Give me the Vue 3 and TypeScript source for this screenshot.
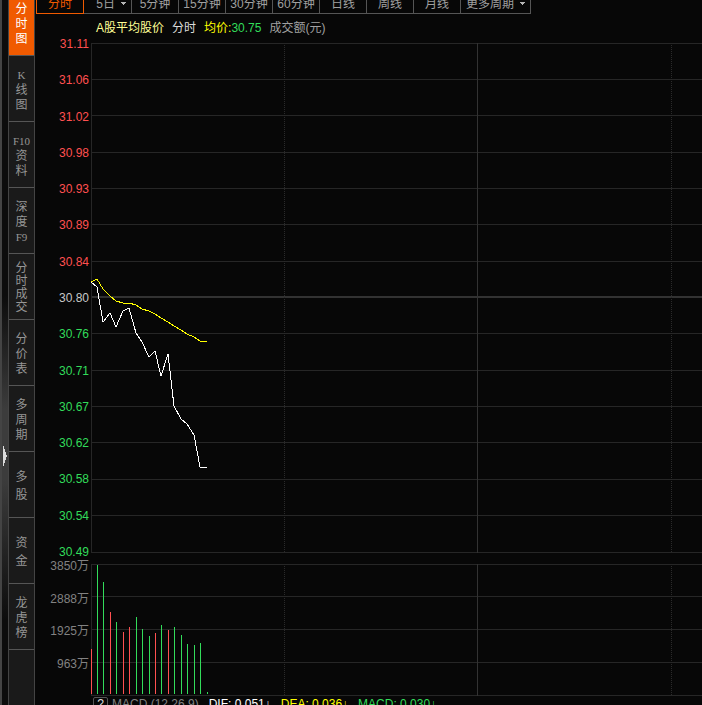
<script setup lang="ts">
import { computed, ref } from 'vue'

interface NavItem {
  lines: string[]
  spacing: 'tight' | 'normal' | 'loose'
}

interface Tab {
  label: string
  menu?: boolean
}

interface Bar {
  x: number
  top: number
  up?: boolean
}

const navItems: NavItem[] = [
  { lines: ['分', '时', '图'], spacing: 'normal' },
  { lines: ['K', '线', '图'], spacing: 'normal' },
  { lines: ['F10', '资', '料'], spacing: 'normal' },
  { lines: ['深', '度', 'F9'], spacing: 'normal' },
  { lines: ['分', '时', '成', '交'], spacing: 'tight' },
  { lines: ['分', '价', '表'], spacing: 'normal' },
  { lines: ['多', '周', '期'], spacing: 'normal' },
  { lines: ['多', '股'], spacing: 'loose' },
  { lines: ['资', '金'], spacing: 'loose' },
  { lines: ['龙', '虎', '榜'], spacing: 'normal' },
]
const activeNav = ref(0)

const tabs: Tab[] = [
  { label: '分时' },
  { label: '5日', menu: true },
  { label: '5分钟' },
  { label: '15分钟' },
  { label: '30分钟' },
  { label: '60分钟' },
  { label: '日线' },
  { label: '周线' },
  { label: '月线' },
  { label: '更多周期', menu: true },
]
const activeTab = ref(0)

const base = 30.8
const prices = [
  '31.11', '31.06', '31.02', '30.98', '30.93', '30.89', '30.84', '30.80',
  '30.76', '30.71', '30.67', '30.62', '30.58', '30.54', '30.49',
]
const tone = (p: string) => (Number(p) > base ? 'up' : Number(p) < base ? 'down' : 'flat')

const priceGrid = [0, 36, 72, 109, 145, 181, 218, 290, 327, 363, 399, 436, 472, 509]
const volumes = ['3850', '2888', '1925', '963']
const volumeGrid = [0, 32, 65, 98, 131]

// Minutes are laid out on a shared horizontal scale; both series use it.
const minutes = [0, 6, 12, 19, 25, 32, 38, 45, 51, 58, 64, 70, 77, 83, 90, 96, 103, 109, 116]
const priceSeries = [239, 244, 279, 270, 284, 268, 265, 290, 299, 314, 308, 333, 311, 363, 376, 381, 392, 424, 425]
const averageSeries = [239, 236, 246, 253, 258, 260, 260, 262, 266, 268, 271, 275, 279, 283, 287, 291, 294, 298, 298]

const toPoints = (ys: number[]) => ys.map((y, i) => `${minutes[i]},${y}`).join(' ')
const pricePoints = computed(() => toPoints(priceSeries))
const averagePoints = computed(() => toPoints(averageSeries))

const volumeTops = [85, 1, 18, 48, 58, 68, 63, 53, 65, 72, 69, 61, 66, 63, 71, 80, 81, 79, 128]
const rising = new Set([0, 3, 5, 6, 10, 12])
const bars: Bar[] = volumeTops.map((top, i) => ({ x: minutes[i], top, up: rising.has(i) }))
</script>

<template>
  <div class="terminal">
    <div class="splitter">
      <button class="handle" type="button" aria-label="展开">
        <svg width="4" height="20" viewBox="0 0 4 20" shape-rendering="crispEdges">
          <path d="M0 0h1v3h1v3h1v3h1v2h-1v3h-1v3h-1v3h-1z" fill="#dcdcdc" />
        </svg>
      </button>
    </div>

    <nav class="side">
      <button
        v-for="(item, i) in navItems"
        :key="i"
        type="button"
        class="side-item"
        :class="[item.spacing, { active: i === activeNav }]"
        @click="activeNav = i"
      >
        <span v-for="(line, j) in item.lines" :key="j" :class="{ latin: /[A-Z]/.test(line) }">{{ line }}</span>
      </button>
    </nav>

    <main class="board">
      <div class="tabs">
        <button
          v-for="(tab, i) in tabs"
          :key="tab.label"
          type="button"
          class="tab"
          :class="{ active: i === activeTab, menu: tab.menu, wide: tab.label.length > 3 && tab.menu }"
          @click="activeTab = i"
        >
          <span>{{ tab.label }}</span>
          <svg v-if="tab.menu" width="5" height="3" viewBox="0 0 5 3" shape-rendering="crispEdges">
            <path d="M0 0h5v1h-1v1h-1v1h-1v-1h-1v-1h-1z" fill="#b4b4b4" />
          </svg>
        </button>
      </div>

      <header class="legend">
        <span class="name">A股平均股价</span>
        <span class="mode">分时</span>
        <span class="avg">均价:<span class="value">30.75</span></span>
        <span class="turnover">成交额(元)</span>
      </header>

      <section class="panel price">
        <div class="axis price-axis">
          <span v-for="p in prices" :key="p" :class="tone(p)">{{ p }}</span>
        </div>
        <svg class="plot" shape-rendering="crispEdges">
          <rect v-for="y in priceGrid" :key="y" class="grid" x="0" :y="y" width="100%" height="1" />
          <rect class="grid base" x="0" y="253" width="100%" height="2" />
          <rect class="grid" x="0" y="0" width="1" height="510" />
          <rect class="grid mid" x="386" y="0" width="1" height="510" />
          <path class="dots" d="M193.5 2V509M580.5 2V509" />
          <polyline class="line average" :points="averagePoints" />
          <polyline class="line current" :points="pricePoints" />
        </svg>
      </section>

      <section class="panel volume">
        <div class="axis volume-axis">
          <span v-for="v in volumes" :key="v">{{ v }}万</span>
        </div>
        <svg class="plot" shape-rendering="crispEdges">
          <rect v-for="y in volumeGrid" :key="y" class="grid" x="0" :y="y" width="100%" height="1" />
          <rect class="grid" x="0" y="0" width="1" height="132" />
          <rect class="grid mid" x="386" y="0" width="1" height="132" />
          <path class="dots" d="M193.5 2V131M580.5 2V131" />
          <rect
            v-for="b in bars"
            :key="b.x"
            :class="b.up ? 'bar-up' : 'bar-down'"
            :x="b.x"
            :y="b.top"
            width="1"
            :height="130 - b.top"
          />
        </svg>
      </section>

      <footer class="indicator">
        <button class="help" type="button">?</button>
        <span class="macd-name">MACD (12,26,9)</span>
        <span class="dif">DIF: 0.051↓</span>
        <span class="dea">DEA: 0.036↓</span>
        <span class="macd">MACD: 0.030↓</span>
      </footer>
    </main>
  </div>
</template>

<style>
body {
  background: #070707;
  overflow: hidden;
}
</style>

<style scoped>
.terminal {
  display: flex;
  height: 100vh;
  overflow: hidden;
  background: #070707;
  font: 12px/14px "Liberation Sans", "Noto Sans CJK SC", sans-serif;
  color: #a0a0a0;
}

button {
  margin: 0;
  padding: 0;
  border: 0;
  background: none;
  color: inherit;
  font: inherit;
  cursor: pointer;
}

.splitter {
  flex: none;
  box-sizing: border-box;
  width: 8px;
  border-left: 2px solid #444;
  background: linear-gradient(#0c0c0c 42%, #3c3c3c 58%, #3c3c3c 68%, #0c0c0c 88%);
  display: flex;
  align-items: center;
}

.handle {
  display: flex;
  margin: 206px 0 0 1px;
}

.side {
  flex: none;
  box-sizing: border-box;
  width: 27px;
  border: solid #444;
  border-width: 0 1px;
  background: #1a1a1a;
  display: flex;
  flex-direction: column;
  margin-top: -10px;
}

.side-item {
  flex: none;
  box-sizing: border-box;
  height: 66px;
  padding-top: 3px;
  border-bottom: 1px solid #555;
  display: flex;
  flex-direction: column;
  align-items: center;
  justify-content: center;
  color: #969696;
  line-height: 15px;
}

.side-item.tight {
  line-height: 13px;
}

.side-item.loose {
  line-height: 18px;
}

.side-item.active {
  background: #f05a00;
  color: #fff;
}

.latin {
  font-family: "Liberation Serif", serif;
  font-size: 11px;
}

.board {
  flex: 1;
  min-width: 0;
}

.tabs {
  display: flex;
  margin: -6px 0 0 1px;
}

.tab {
  flex: none;
  box-sizing: border-box;
  width: 47px;
  height: 20px;
  border: solid #555;
  border-width: 0 1px 1px 0;
  display: flex;
  align-items: center;
  justify-content: center;
  gap: 6px;
}

.tab:nth-child(-n + 2) {
  width: 48px;
}

.tab.menu {
  justify-content: flex-end;
  padding-right: 5px;
}

.tab.wide {
  width: 70px;
}

.tab.active {
  border-color: #f05a00;
  border-left-width: 1px;
  color: #f05a00;
}

.legend {
  display: flex;
  align-items: center;
  gap: 8px;
  height: 29px;
  padding: 0 0 2px 61px;
  box-sizing: border-box;
  white-space: nowrap;
}

.name {
  color: #ffff96;
}

.mode {
  color: #dcdcdc;
}

.avg {
  color: #ff0;
}

.value {
  color: #32dc5a;
}

.panel {
  display: grid;
  grid-template-columns: 56px 1fr;
}

.price {
  height: 510px;
}

.volume {
  height: 132px;
  margin-top: 11px;
}

.axis {
  display: flex;
  flex-direction: column;
  justify-content: space-between;
  text-align: right;
  padding-right: 2px;
  white-space: nowrap;
}

.price-axis {
  margin: -6px 0;
}

.volume-axis {
  height: 112px;
  margin-top: -5px;
  color: #828282;
}

.up {
  color: #ff5050;
}

.down {
  color: #32dc5a;
}

.flat {
  color: #c8c8c8;
}

.plot {
  display: block;
  width: 100%;
  height: 100%;
}

.grid {
  fill: #262626;
}

.mid,
.base {
  fill: #323232;
}

.dots {
  stroke: #2a2a2a;
  stroke-dasharray: 1 1;
}

.line {
  fill: none;
  stroke-width: 1;
}

.current {
  stroke: #fff;
}

.average {
  stroke: #ff0;
}

.bar-up {
  fill: #ff5050;
}

.bar-down {
  fill: #32dc5a;
}

.indicator {
  display: flex;
  gap: 10px;
  padding: 1px 0 0 58px;
  white-space: nowrap;
}

.help {
  box-sizing: border-box;
  width: 15px;
  height: 15px;
  margin-right: -6px;
  border: 1px solid #555;
  border-radius: 2px;
  color: #dcdcdc;
  line-height: 13px;
}

.macd-name {
  color: #828282;
}

.dif {
  color: #fff;
}

.dea {
  color: #ff0;
}

.macd {
  color: #32dc5a;
}
</style>
